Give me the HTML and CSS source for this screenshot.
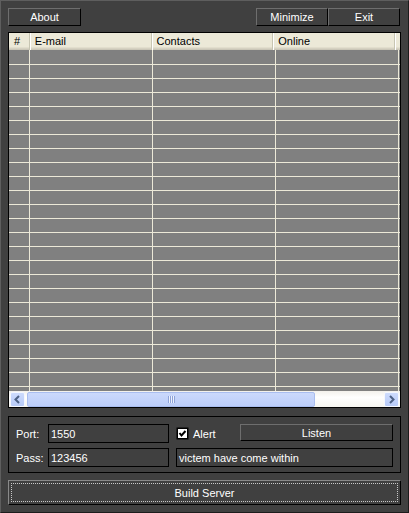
FILE: index.html
```html
<!DOCTYPE html>
<html>
<head>
<meta charset="utf-8">
<link rel="stylesheet" href="styles.css">
</head>
<body>
<div class="window">
  <div class="topbar">
    <div class="btn about">About</div>
    <div class="right-btns">
      <div class="btn min">Minimize</div>
      <div class="btn exit">Exit</div>
    </div>
  </div>

  <div class="list">
    <div class="header">
      <div class="hcell c1">#</div>
      <div class="hcell c2">E-mail</div>
      <div class="hcell c3">Contacts</div>
      <div class="hcell c4">Online</div>
      <div class="hcell filler"></div>
    </div>
    <div class="rows">
      <div class="col c1"></div>
      <div class="col c2"></div>
      <div class="col c3"></div>
      <div class="col c4"></div>
      <div class="col filler"></div>
    </div>
    <div class="hscroll">
      <div class="arrow">
        <svg width="13" height="13" viewBox="0 0 13 13"><polyline points="8,3 4.5,6.5 8,10" fill="none" stroke="#4d6185" stroke-width="2"/></svg>
      </div>
      <div class="track">
        <div class="thumb"><span class="grip"></span></div>
      </div>
      <div class="arrow">
        <svg width="13" height="13" viewBox="0 0 13 13"><polyline points="5,3 8.5,6.5 5,10" fill="none" stroke="#4d6185" stroke-width="2"/></svg>
      </div>
    </div>
  </div>

  <div class="group">
    <div class="grow">
      <span class="label">Port:</span>
      <div class="field port">1550</div>
      <svg class="check" width="13" height="13" viewBox="0 0 13 13">
        <rect x="0.5" y="0.5" width="12" height="12" fill="#000"/>
        <rect x="2" y="2" width="9" height="9" fill="#fff"/>
        <polyline points="3.5,6 5.5,8.5 9.5,4" fill="none" stroke="#000" stroke-width="2"/>
      </svg>
      <span class="alert">Alert</span>
      <div class="btn listen">Listen</div>
    </div>
    <div class="grow">
      <span class="label">Pass:</span>
      <div class="field port">123456</div>
      <div class="field status">victem have come within</div>
    </div>
  </div>

  <div class="build"><div class="focus">Build Server</div></div>
</div>
</body>
</html>
```

FILE: styles.css
```css
* { box-sizing: border-box; }

body {
  margin: 0;
  font-family: "Liberation Sans", Arial, sans-serif;
  font-size: 11px;
}

.window {
  width: 409px;
  height: 513px;
  background: #404040;
  border: 1px solid;
  border-color: #5e5e5e #1c1c1c #1c1c1c #5e5e5e;
  padding: 7px 7px 0 7px;
  color: #fff;
  display: flex;
  flex-direction: column;
}

.topbar {
  display: flex;
  justify-content: space-between;
  height: 18px;
}

.btn {
  height: 18px;
  border: 1px solid;
  border-color: #6e6e6e #000 #000 #6e6e6e;
  background: #404040;
  display: flex;
  align-items: center;
  justify-content: center;
  color: #fff;
}

.about { width: 73px; }

.right-btns {
  display: flex;
  margin-right: 1px;
}

.min, .exit { width: 72px; }

/* list view */
.list {
  margin-top: 6px;
  height: 376px;
  border: 1px solid #000;
  display: flex;
  flex-direction: column;
  background: #808080;
}

.header {
  display: flex;
  height: 17px;
  background: #ece9d8;
  color: #000;
  box-shadow: inset 0 -1px #cbc7b8, inset 0 -2px #d6d2c2, inset 0 -3px #e2decd;
}

.hcell {
  display: flex;
  align-items: center;
  padding-left: 5px;
  padding-bottom: 1px;
  border-right: 1px solid #c7c5b2;
  box-shadow: inset 1px 0 #fff;
}

.header .c1 { box-shadow: none; padding-left: 5px; }

.c1 { width: 21px; }
.c2 { width: 123px; }
.c3 { width: 123px; }
.c4 { width: 123px; }
.filler { flex: 1; border-right: none; }

.rows {
  display: flex;
  height: 341px;
}

.col {
  height: 100%;
  border-right: 1px solid #ece9d8;
  background: repeating-linear-gradient(to bottom, #808080 0 13px, #ece9d8 13px 14px);
  background-position: 0 1px;
}

.rows .filler { border-right: none; }

/* horizontal scrollbar */
.hscroll {
  display: flex;
  height: 16px;
  padding: 1px 1px 0 1px;
  background: linear-gradient(to bottom, #f3f1ec, #fefefe 40%, #f6f5f0);
}

.arrow {
  width: 15px;
  height: 15px;
  border: 1px solid #f4f7fe;
  border-radius: 2px;
  background: linear-gradient(to bottom, #cddbfd, #b8cbf8);
  display: flex;
  align-items: center;
  justify-content: center;
}

.track {
  flex: 1;
  padding: 0 2px;
}

.thumb {
  width: 288px;
  height: 15px;
  border: 1px solid #a9bdef;
  border-radius: 2px;
  background: linear-gradient(to bottom, #cbd9fc, #bccdf9);
  display: flex;
  align-items: center;
  justify-content: center;
}

.grip {
  width: 7px;
  height: 7px;
  background: repeating-linear-gradient(to right, #8ea3d9 0 1px, #eef2fe 1px 2px);
}

/* settings group */
.group {
  margin-top: 8px;
  height: 57px;
  border: 1px solid #000;
  padding: 7px 7px 5px 7px;
  display: flex;
  flex-direction: column;
  gap: 5px;
}

.grow {
  display: flex;
  align-items: center;
  height: 19px;
}

.label { width: 32px; }

.field {
  height: 19px;
  border: 1px solid #000;
  padding-left: 2px;
  display: flex;
  align-items: center;
  padding-top: 1px;
}

.port { width: 121px; }

.status {
  flex: 1;
  margin-left: 7px;
}

.check {
  margin-left: 7px;
  display: block;
}

.alert { margin-left: 4px; }

.listen {
  width: 153px;
  height: 17px;
  margin-left: auto;
  align-self: flex-start;
}

/* build button */
.build {
  margin-top: 7px;
  height: 25px;
  border: 1px solid;
  border-color: #8a8a8a #000 #000 #8a8a8a;
  padding: 2px;
}

.focus {
  height: 100%;
  border: 1px dotted #c8c8c8;
  display: flex;
  align-items: center;
  justify-content: center;
}
```
